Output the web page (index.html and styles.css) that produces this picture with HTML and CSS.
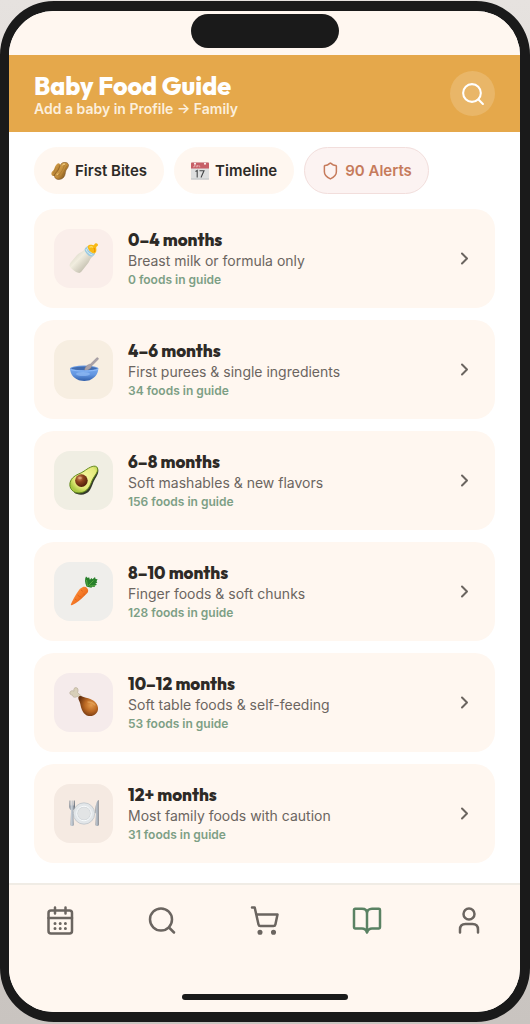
FILE: index.html
```html
<!DOCTYPE html>
<html lang="en">
<head>
<meta charset="utf-8">
<meta name="viewport" content="width=device-width, initial-scale=1">
<title>Baby Food Guide</title>
<link rel="stylesheet" href="styles.css">
</head>
<body>
<div class="phone">
  <div class="status-bar"><div class="notch"></div></div>
  <header class="header">
    <div>
      <h1 class="title">Baby Food Guide</h1>
      <p class="subtitle">Add a baby in Profile → Family</p>
    </div>
    <button class="search-button" type="button" aria-label="Search foods">
      <svg class="line-icon" width="25" height="25" viewBox="0 0 24 24"><circle cx="11.500" cy="11.500" r="8.500"/><path d="m17.700 17.700 4.300 4.300"/></svg>
    </button>
  </header>
  <main class="content">
    <div class="chips">
      <button class="chip" type="button">
        <svg width="18" height="18" viewBox="0 0 18 18">
          <defs><linearGradient id="nut" x1="0" y1="0" x2="1" y2="1"><stop offset="0" stop-color="#e8bb65"/><stop offset=".55" stop-color="#bf8938"/><stop offset="1" stop-color="#5e3a10"/></linearGradient></defs>
          <path d="M5.500 2.500C8-.2 10 2 8.900 5.400 8.400 7 7.800 7.400 7.500 9c-.5 3-2.500 5.300-5 5C-.2 13.600-.2 10.500 1.800 9 3.700 7.600 3.200 5 5.500 2.500Z" fill="url(#nut)"/>
          <path d="M10.500 1.500C13-.8 18.300.4 17.400 4c-.6 2.500-2 3-2.600 4.800-.7 2.100-.3 4.500-2.300 6.700-2.200 2.500-7 2.600-8.500.2-1.500-2.500.9-4.800 2.600-6.600C8.800 6.800 8 3.900 10.500 1.500Z" fill="url(#nut)" stroke="#6b4314" stroke-width=".5"/>
          <path d="m13.500 3-2 5-4 6M15.800 4 13 9.500l-1.500 4M5 5 2.500 11" fill="none" stroke="#7d531c" stroke-width=".5" opacity=".5"/>
          <path d="M11.500 3c1-1 2-1 2.500-.6M7 11.500l-1 1.300" stroke="#ffe4a1" fill="none"/>
        </svg>
        First Bites
      </button>
      <button class="chip" type="button">
        <svg width="18" height="18" viewBox="0 0 18 18">
          <rect y=".5" width="18" height="17" rx=".8" fill="#dedfdf"/><path d="M0 6.500V1.300Q0 .5.800.500h16.400q.8 0 .8.800v5.200Z" fill="#c75f67"/>
          <circle cx="4" cy="1.700" r="1" fill="#fff"/><circle cx="14" cy="1.700" r="1" fill="#fff"/>
          <path d="M3.500 3v1.800H2M5 3v1.800h1.500V3M8 3v1.800h1.300" stroke="#f3cccd" stroke-width=".6" fill="none"/>
          <path d="m4.500 9.500 1.700-1v7M8.500 8.700H13l-3 6.800" stroke="#444748" stroke-width="1.100" fill="none"/>
          <path d="M0 17h18" stroke="#bfc2c3"/>
        </svg>
        Timeline
      </button>
      <button class="chip chip-alert" type="button">
        <svg class="line-icon" width="18" height="18" viewBox="0 0 24 24"><path d="M20.500 13c0 5-3.500 7.500-8 9.500-4.500-2-8-4.500-8-9.500V5.500l1-1c2.500 0 4.500-1.200 6.200-2.700q.8-.6 1.600 0c1.700 1.500 3.700 2.700 6.200 2.700l1 1Z"/></svg>
        90 Alerts
      </button>
    </div>

    <a class="card" href="#0-4">
      <span class="tile tile-rose">
        <svg width="30" height="30" viewBox="0 0 30 30">
          <defs><linearGradient id="milk" x1="0" y1="0" x2="1" y2="1"><stop offset="0" stop-color="#c9c6b6"/><stop offset=".4" stop-color="#f1eddf"/><stop offset="1" stop-color="#a5a18f"/></linearGradient></defs>
          <path d="M15.500 5.500c-1.500 2-5.500 3.200-7.500 5.600L1.700 18.500c-1.400 1.700-1.500 3.400-.4 4.700 2 2.400 5 4.600 7.900 5.600 1.500.4 2.800-.2 3.700-1.700l6.500-8.300c1.600-2.300 1.800-5 4.500-6.300Z" fill="url(#milk)"/>
          <path d="M18.800 2.200c-1.600.2-3 1.900-3.200 3.600.5 3 3.600 6.300 6.800 6.800 1.900-.2 3.400-1.900 3.700-3.700Z" fill="#9cc9df"/>
          <path d="M17 5c1 3.200 3.300 5.300 6.500 6M18.200 3.500c1.200 3 3.500 5 6.700 5.700" stroke="#d4edf5" fill="none"/>
          <path d="M18.600 2.500C20 .5 22 .7 24.200 1.200c1.300.2 1.100-2 2.800-2 1.600.1 2.600 1.500 1.700 2.600-.9.800-1.700.8-1.500 2.200.4 2.200.5 4.500-1.800 5.500-3.300-.4-6.300-3.400-6.800-7Z" fill="#f8b915"/>
          <path d="M20.500 3.200c1.200-.8 2.700-.5 3.200.3" stroke="#ffe779" fill="none" stroke-width="1.200"/><path d="M25 4c1 2 .8 3 .2 4" stroke="#e98900" fill="none"/>
        </svg>
      </span>
      <span class="info"><strong class="age">0–4 months</strong><span class="desc">Breast milk or formula only</span><span class="count">0 foods in guide</span></span>
      <svg class="chevron line-icon" width="20" height="20" viewBox="0 0 20 20"><path d="m7 4.500 5 5-5 5"/></svg>
    </a>

    <a class="card" href="#4-6">
      <span class="tile tile-sand">
        <svg width="30" height="30" viewBox="0 0 30 30">
          <defs><linearGradient id="bowl" x1="0" y1="0" x2="0" y2="1"><stop offset="0" stop-color="#75a7ed"/><stop offset=".5" stop-color="#6295e0"/><stop offset="1" stop-color="#315fab"/></linearGradient></defs>
          <ellipse cx="15.200" cy="13.500" rx="14.200" ry="3" fill="#6a9be3"/><ellipse cx="15.200" cy="13.600" rx="12.700" ry="2" fill="#426caf"/>
          <path d="M27.500 3.100 21.500 9c-3 .5-6 3.100-5.800 6.300 3 .5 6.600-1.500 7.300-4.700l6-6c1.100-1.500-.3-2.500-1.500-1.500Z" fill="#aaa2a9" stroke="#827b83" stroke-width=".4"/>
          <path d="M1 13.600c3 2.400 25.400 2.400 28.400 0-.3 5.800-4 9.600-8 11.200-.8 1.500-11.400 1.500-12.400 0-4.300-1.600-7.700-5.400-8-11.200Z" fill="url(#bowl)"/>
          <path d="M1.500 14.500c5 2 22.500 2 27.500 0" stroke="#9cc5ff" fill="none" stroke-width=".7"/><ellipse cx="14" cy="19" rx="7" ry="2" fill="#a4cafb" opacity=".5"/>
        </svg>
      </span>
      <span class="info"><strong class="age">4–6 months</strong><span class="desc">First purees &amp; single ingredients</span><span class="count">34 foods in guide</span></span>
      <svg class="chevron line-icon" width="20" height="20" viewBox="0 0 20 20"><path d="m7 4.500 5 5-5 5"/></svg>
    </a>

    <a class="card" href="#6-8">
      <span class="tile tile-sage">
        <svg width="30" height="30" viewBox="0 0 30 30">
          <defs><radialGradient id="flesh" cx=".55" cy=".4" r=".6"><stop offset="0" stop-color="#f7f6a0"/><stop offset=".7" stop-color="#e3e979"/><stop offset="1" stop-color="#a9c842"/></radialGradient><radialGradient id="pit" cx=".35" cy=".3" r=".7"><stop offset="0" stop-color="#d18b5a"/><stop offset=".45" stop-color="#8c431d"/><stop offset="1" stop-color="#54210c"/></radialGradient></defs>
          <path d="M28.500 2c2 3 .2 7-2.500 11-2.500 4-3 8-5 11-4 6-12 5.500-16 2.500Z" fill="#33382b"/>
          <path d="M27.600.8c3.100 3-.8 7.300-3.200 11.200-2 3.200-2.800 7.200-4.900 10-3.600 5-10.700 6.400-15.200 3.300-4.800-3.500-4.200-9.800-.6-13.500 3.300-3.500 7.600-3.900 11.300-6.600C18.300 2.800 24.500-1.500 27.600.8Z" fill="url(#flesh)" stroke="#63891d"/>
          <circle cx="12.400" cy="14.600" r="6.300" fill="url(#pit)"/><ellipse cx="11" cy="12" rx="1.800" ry="1.200" fill="#e8b28e" opacity=".65"/>
        </svg>
      </span>
      <span class="info"><strong class="age">6–8 months</strong><span class="desc">Soft mashables &amp; new flavors</span><span class="count">156 foods in guide</span></span>
      <svg class="chevron line-icon" width="20" height="20" viewBox="0 0 20 20"><path d="m7 4.500 5 5-5 5"/></svg>
    </a>

    <a class="card" href="#8-10">
      <span class="tile tile-mist">
        <svg width="30" height="30" viewBox="0 0 30 30">
          <defs><linearGradient id="root" x1="0" y1="0" x2="1" y2="1"><stop offset="0" stop-color="#ffa04c"/><stop offset=".5" stop-color="#f57826"/><stop offset="1" stop-color="#c94d0e"/></linearGradient></defs>
          <path d="M17.500 9.500C15.700 5.500 15.600 2 17-.5l1.800 1.400 1.300-.6.800 2.500L22.500 1l1 1.200L26 0l.6 2 2 .3-1.100 2 .8 1.200-2 1.300 1.700 1-2.400 1 .3 1.200-2.700-.2-.8 1-3.300-.8Z" fill="#28802b"/>
          <path d="m18.500 9-1-6m2 5.500 5-5m-4 5.500 5.500-.3" stroke="#65b545" fill="none" stroke-width=".8"/>
          <path d="M13.500 10.200c2.700-1.400 5.600.6 5.700 3.500 0 2.100-1.900 3.200-3.700 5.100-3.500 3.500-7.700 7.200-12.200 9.300-1.200.5-1.800-.2-1.300-1.200 2.400-5 6-11.500 9-15.100Z" fill="url(#root)"/>
          <path d="m12 13 1.800 1.300M8.500 18l1.700 1.300m4.300-2.300 1.200 1m-5.200 1 1.300 1.300M6 22l1.500 1" stroke="#cb5414" stroke-width=".6"/>
        </svg>
      </span>
      <span class="info"><strong class="age">8–10 months</strong><span class="desc">Finger foods &amp; soft chunks</span><span class="count">128 foods in guide</span></span>
      <svg class="chevron line-icon" width="20" height="20" viewBox="0 0 20 20"><path d="m7 4.500 5 5-5 5"/></svg>
    </a>

    <a class="card" href="#10-12">
      <span class="tile tile-mauve">
        <svg width="30" height="30" viewBox="0 0 30 30">
          <defs><radialGradient id="meat" cx=".65" cy=".45" r=".65"><stop offset="0" stop-color="#e59a4b"/><stop offset=".5" stop-color="#b96722"/><stop offset="1" stop-color="#67300e"/></radialGradient></defs>
          <path d="M10.800 10.500 8.300 8.300C6.500 10 3.500 9.500 3.500 7.100 1.500 7.300.200 5.300 1 4c.7-1.300 2.700-1.700 4-.8C4.300 1 5.300-.5 7-.4c2.300.2 2.500 2.900 1.600 5.100L12.500 8Z" fill="#d8cfb8" stroke="#aa9f88" stroke-width=".5"/>
          <path d="M10 8.500c2-1.300 4 .8 7 1.300 6 1 11.500 4.500 12 9.900.6 5.600-4.500 9-9.300 8.200-5.700-1-7.500-7.500-8.500-12.500-.5-2.500-3-5-1.200-6.900Z" fill="url(#meat)"/>
          <path d="M19 14c3 0 5.500 1.200 7 3" stroke="#f2bd76" stroke-width="1.300" stroke-linecap="round" fill="none" opacity=".4"/>
        </svg>
      </span>
      <span class="info"><strong class="age">10–12 months</strong><span class="desc">Soft table foods &amp; self-feeding</span><span class="count">53 foods in guide</span></span>
      <svg class="chevron line-icon" width="20" height="20" viewBox="0 0 20 20"><path d="m7 4.500 5 5-5 5"/></svg>
    </a>

    <a class="card" href="#12-plus">
      <span class="tile tile-clay">
        <svg width="30" height="30" viewBox="0 0 30 30">
          <defs><linearGradient id="steel"><stop offset="0" stop-color="#7d858f"/><stop offset=".45" stop-color="#ccd4dd"/><stop offset="1" stop-color="#5c6571"/></linearGradient></defs>
          <circle cx="15" cy="14.500" r="10.700" fill="#e2e6e9" stroke="#b6bec4" stroke-width=".7"/><circle cx="15" cy="14.500" r="7.300" fill="#d4d8db" stroke="#f8fbfc"/><circle cx="15" cy="14.500" r="6" fill="#e2e4e5"/>
          <path d="M.5 1.500h1l.2 5h.7l.2-5h1l.2 5h.7l.2-5h1l.3 6c0 2-1.300 3.200-1.900 3.800l.7 14.200c0 2.100-3.400 2.100-3.400 0l.7-14.200C1 10.500.2 9.500.2 7.500Z" fill="url(#steel)"/>
          <path d="M29.600 1c-2.300 1-3.400 6.500-3.100 13l.5.5-.5 11c0 2 3.200 2 3.200 0Z" fill="url(#steel)"/>
        </svg>
      </span>
      <span class="info"><strong class="age">12+ months</strong><span class="desc">Most family foods with caution</span><span class="count">31 foods in guide</span></span>
      <svg class="chevron line-icon" width="20" height="20" viewBox="0 0 20 20"><path d="m7 4.500 5 5-5 5"/></svg>
    </a>
  </main>
  <footer class="footer">
    <nav class="tabs" aria-label="Main">
      <a class="tab" href="#plan" aria-label="Meal plan"><svg class="line-icon" width="30" height="30" viewBox="0 0 30 30"><rect x="3.500" y="4.500" width="23.500" height="23" rx="2.500"/><path d="M3.500 12H27M10 1.500v6M20.500 1.500v6"/><path class="dots" d="M10 17.500h.01M15.200 17.500h.01M20.400 17.500h.01M10 22.500h.01M15.200 22.500h.01M20.400 22.500h.01"/></svg></a>
      <a class="tab" href="#search" aria-label="Search"><svg class="line-icon" width="30" height="30" viewBox="0 0 30 30"><circle cx="14" cy="13.500" r="11"/><path d="m22 21.500 5 5"/></svg></a>
      <a class="tab" href="#cart" aria-label="Shopping cart"><svg class="line-icon" width="30" height="30" viewBox="0 0 30 30"><path d="M2 1.500h2.700l3.800 17c.2 1 .8 1.500 1.800 1.500h13.200c1 0 1.700-.5 1.900-1.500l2.100-10H6.500"/><circle class="wheel" cx="10" cy="26.300" r="1.300"/><circle class="wheel" cx="23.500" cy="26.300" r="1.300"/></svg></a>
      <a class="tab tab-active" href="#guide" aria-label="Food guide" aria-current="page"><svg class="line-icon" width="30" height="30" viewBox="0 0 30 30"><path d="M15 7.500v19c-.8-2.500-2.500-4-5-4H3c-.7 0-1-.5-1-1.200V4c0-.7.4-1.200 1.100-1.200H10c3 0 5 1.700 5 4.700 0-3 2-4.700 5-4.700h6.900c.7 0 1.100.5 1.100 1.200v17.300c0 .7-.3 1.200-1 1.200H20c-2.500 0-4.200 1.500-5 4"/></svg></a>
      <a class="tab" href="#profile" aria-label="Profile"><svg class="line-icon" width="30" height="30" viewBox="0 0 30 30"><circle cx="15" cy="8" r="5.500"/><path d="M6 26.500v-3C6 20 8 18 11.500 18h7c3.500 0 5.500 2 5.500 5.500v3"/></svg></a>
    </nav>
    <div class="home-indicator"></div>
  </footer>
</div>
</body>
</html>
```
FILE: styles.css
```css
* { box-sizing: border-box; }

body {
  display: flex;
  min-height: 100vh;
  margin: 0;
  padding: 1px 0 2px;
  background: linear-gradient(#e6e2df, #c9c4c0);
  color: #2d2a26;
  font-family: Inter, "Noto Sans", sans-serif;
}

.phone {
  display: flex;
  flex: 1;
  flex-direction: column;
  overflow: hidden;
  border: 10px solid #1a1a1a;
  border-left-width: 9px;
  border-radius: 54px;
  background: #fff;
}

.status-bar {
  display: flex;
  justify-content: center;
  padding: 3px 0 7px;
  background: #fff7f0;
}

.notch {
  width: 148px;
  height: 34px;
  border-radius: 17px;
  background: #1a1a1a;
}

.header {
  display: flex;
  align-items: center;
  justify-content: space-between;
  padding: 16px 25px;
  background: #e5a84b;
}

.title {
  margin: 0;
  color: #fff;
  font-family: Outfit, Lato, sans-serif;
  font-size: 25px;
  font-weight: 800;
  line-height: 30px;
}

.subtitle {
  margin: 0;
  color: #fcefdc;
  font-size: 14px;
  font-weight: 600;
  line-height: 15px;
}

.line-icon {
  fill: none;
  stroke: currentColor;
  stroke-width: 2;
  stroke-linecap: round;
  stroke-linejoin: round;
}

.search-button {
  display: flex;
  align-items: center;
  justify-content: center;
  width: 45px;
  height: 45px;
  padding: 0;
  border: 0;
  border-radius: 50%;
  background: #e9b668;
  color: #fff;
}

.content {
  display: flex;
  flex: 1;
  flex-direction: column;
  gap: 12px;
  padding: 15px 25px 20px;
}

.chips {
  display: flex;
  gap: 10px;
  margin-bottom: 3px;
}

.chip {
  display: flex;
  align-items: center;
  gap: 6px;
  height: 47px;
  padding: 0 16px;
  border: 1px solid #fff7f0;
  border-radius: 24px;
  background: #fff7f0;
  color: #2d2a26;
  font: 600 15px/20px Inter, sans-serif;
}

.chip-alert {
  border-color: #f2dedc;
  background: #fcf3f2;
  color: #c67b5c;
}

.card {
  display: flex;
  align-items: center;
  gap: 15px;
  padding: 20px;
  border-radius: 20px;
  background: #fff7f0;
  color: inherit;
  text-decoration: none;
}

.tile {
  display: flex;
  align-items: center;
  justify-content: center;
  width: 59px;
  height: 59px;
  border-radius: 16px;
}

.tile svg { overflow: visible; }
.tile-rose { background: #faeeea; }
.tile-sand { background: #f7eee1; }
.tile-sage { background: #f0eee3; }
.tile-mist { background: #efeeeb; }
.tile-mauve { background: #f5ebeb; }
.tile-clay { background: #f5eae2; }

.info {
  display: flex;
  flex: 1;
  flex-direction: column;
}

.age {
  font-family: Outfit, Lato, sans-serif;
  font-size: 17px;
  font-weight: 800;
  line-height: 22px;
}

.desc {
  color: #6b6560;
  font-size: 14px;
  line-height: 20px;
}

.count {
  color: #7d9f85;
  font-size: 12px;
  font-weight: 600;
  line-height: 17px;
}

.chevron { color: #6b6560; }

.footer {
  display: flex;
  flex-direction: column;
  align-items: center;
  gap: 58px;
  padding: 21px 0 12px;
  border-top: 2px solid #f0ece5;
  background: #fff7f0;
}

.tabs {
  display: flex;
  align-self: stretch;
}

.tab {
  display: flex;
  flex: 1;
  justify-content: center;
  color: #6b6560;
}

.tab .line-icon { stroke-width: 2.5; }
.tab-active { color: #5a8263; }
.tab .dots { stroke-width: 3; }
.wheel { fill: currentColor; }

.home-indicator {
  width: 166px;
  height: 6px;
  border-radius: 3px;
  background: #1a1a1a;
}
```
